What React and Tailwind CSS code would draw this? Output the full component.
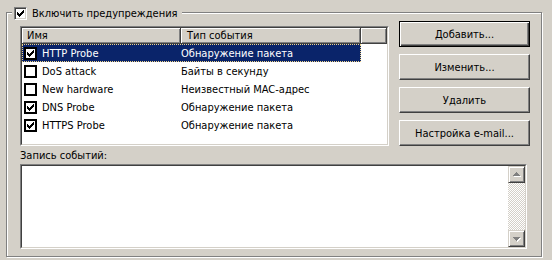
import React from 'react';

const rows = [
  { name: 'HTTP Probe', type: 'Обнаружение пакета', checked: true, selected: true },
  { name: 'DoS attack', type: 'Байты в секунду', checked: false },
  { name: 'New hardware', type: 'Неизвестный MAC-адрес', checked: false },
  { name: 'DNS Probe', type: 'Обнаружение пакета', checked: true },
  { name: 'HTTPS Probe', type: 'Обнаружение пакета', checked: true },
];

const Check = () => (
  <svg width="7" height="7" viewBox="0 0 7 7" shapeRendering="crispEdges">
    <path
      d="M0 2h1v3h-1zM1 3h1v3h-1zM2 4h1v3h-1zM3 3h1v3h-1zM4 2h1v3h-1zM5 1h1v3h-1zM6 0h1v3h-1z"
      fill="#000"
    />
  </svg>
);

// flat box used by the list view
const ListBox = ({ checked }) => (
  <div className="flex h-[13px] w-[13px] shrink-0 items-center justify-center border-2 border-black bg-white">
    {checked && <Check />}
  </div>
);

// sunken 3d box for the group caption
const Box3d = ({ checked }) => (
  <div className="flex h-[13px] w-[13px] shrink-0 items-center justify-center border border-t-[#808080] border-l-[#808080] border-r-white border-b-white bg-white shadow-[inset_1px_1px_0_#404040,inset_-1px_-1px_0_#d4d0c8]">
    {checked && <Check />}
  </div>
);

const Button = ({ children, isDefault }) => (
  <div
    className={
      isDefault
        ? 'flex h-[26px] items-center justify-center border border-black shadow-[inset_1px_1px_0_#fff,inset_-1px_-1px_0_#404040,inset_-2px_-2px_0_#808080]'
        : 'flex h-[26px] items-center justify-center border border-t-white border-l-white border-r-[#404040] border-b-[#404040] shadow-[inset_-1px_-1px_0_#808080]'
    }
  >
    <span className="leading-none">{children}</span>
  </div>
);

const HeaderCell = ({ children, className }) => (
  <div
    className={`flex h-full items-center border-r border-b border-[#404040] shadow-[inset_1px_1px_0_#fff,inset_-1px_-1px_0_#808080] ${className}`}
  >
    <span className="leading-none">{children}</span>
  </div>
);

const Arrow = ({ down }) => (
  <svg width="9" height="6" viewBox="0 0 9 6" shapeRendering="crispEdges">
    {down ? (
      <>
        <path d="M2 2h7l-3.5 4z" fill="#fff" />
        <path d="M1 1h7l-3.5 4z" fill="#808080" />
      </>
    ) : (
      <>
        <path d="M2 5h7l-3.5 -4z" fill="#fff" />
        <path d="M1 4h7l-3.5 -4z" fill="#808080" />
      </>
    )}
  </svg>
);

const ScrollButton = ({ down }) => (
  <div className="flex h-[17px] items-center justify-center border border-t-[#d4d0c8] border-l-[#d4d0c8] border-r-[#404040] border-b-[#404040] bg-[#d4d0c8] shadow-[inset_1px_1px_0_#fff,inset_-1px_-1px_0_#808080]">
    <Arrow down={down} />
  </div>
);

export default function App() {
  return (
    <div className="h-[260px] w-[552px] bg-[#d4d0c8] pt-[12px] pl-[6px] font-['DejaVu_Sans_Condensed','DejaVu_Sans',sans-serif] text-[11px] text-black">
      <div className="relative h-[245px] w-[536px] border border-[#808080] pt-[8px] pr-[11px] pl-[13px] shadow-[inset_1px_1px_0_#fff,1px_1px_0_#fff]">
        {/* group caption sits over the frame */}
        <div className="absolute top-[-6px] left-[5px] flex items-center gap-[5px] bg-[#d4d0c8] px-[2px]">
          <Box3d checked />
          <span className="pr-[2px] leading-none">Включить предупреждения</span>
        </div>

        <div className="flex items-start">
          {/* list view */}
          <div className="mt-[5px] h-[120px] w-[369px] border border-t-[#808080] border-l-[#808080] border-r-white border-b-white">
            <div className="h-full border border-t-[#404040] border-l-[#404040] border-r-[#d4d0c8] border-b-[#d4d0c8] bg-white">
              <div className="flex h-[16px] bg-[#d4d0c8]">
                <HeaderCell className="w-[159px] pl-[5px]">Имя</HeaderCell>
                <HeaderCell className="w-[180px] pl-[6px]">Тип события</HeaderCell>
                <HeaderCell className="flex-1" />
              </div>
              {rows.map((r) => (
                <div key={r.name} className="flex h-[18px]">
                  <div
                    className={
                      r.selected
                        ? 'flex w-[339px] items-center border border-dotted border-[#f0d488] bg-[#0a246a] text-white'
                        : 'flex w-[339px] items-center border border-transparent'
                    }
                  >
                    <div className="flex w-[158px] items-center pl-[1px]">
                      <ListBox checked={r.checked} />
                      <span className="ml-[5px] leading-none">{r.name}</span>
                    </div>
                    <span className="leading-none">{r.type}</span>
                  </div>
                </div>
              ))}
            </div>
          </div>

          {/* buttons */}
          <div className="ml-[10px] flex w-[131px] flex-col gap-[7px]">
            <Button isDefault>Добавить...</Button>
            <Button>Изменить...</Button>
            <Button>Удалить</Button>
            <Button>Настройка e-mail...</Button>
          </div>
        </div>

        <div className="flex h-[18px] items-center">
          <span className="leading-none">Запись событий:</span>
        </div>

        {/* event log */}
        <div className="h-[85px] w-[507px] border border-t-[#808080] border-l-[#808080] border-r-white border-b-white">
          <div className="flex h-full border border-t-[#404040] border-l-[#404040] border-r-[#d4d0c8] border-b-[#d4d0c8] bg-white">
            <div className="flex-1" />
            <div className="flex w-[17px] flex-col">
              <ScrollButton />
              <div className="flex-1 bg-[repeating-conic-gradient(#fff_0_25%,#d4d0c8_0_50%)] bg-[length:2px_2px]" />
              <ScrollButton down />
            </div>
          </div>
        </div>
      </div>
    </div>
  );
}
